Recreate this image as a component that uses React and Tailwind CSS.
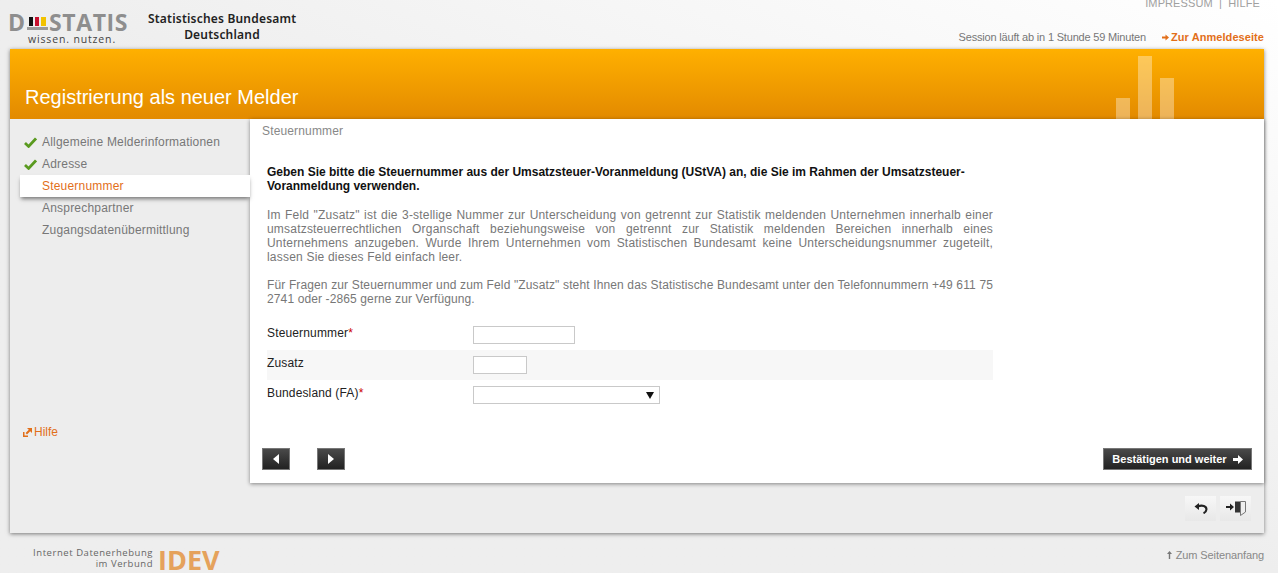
import React from 'react';

const Check = () => (
  <svg width="13" height="11" viewBox="0 0 13 11" className="shrink-0">
    <path d="M1 6 L4.6 9.4 L12 1.4" fill="none" stroke="#5a9a1f" strokeWidth="2.8" />
  </svg>
);

const SmallArrow = () => (
  <svg width="7" height="7" viewBox="0 0 7 7" className="shrink-0">
    <path d="M0 2.5 H3.5 V0.5 L7 3.5 L3.5 6.5 V4.5 H0 Z" fill="#e26f1a" />
  </svg>
);

const steps = [
  { label: 'Allgemeine Melderinformationen', done: true },
  { label: 'Adresse', done: true },
  { label: 'Steuernummer', active: true },
  { label: 'Ansprechpartner' },
  { label: 'Zugangsdatenübermittlung' },
];

const Logo = () => (
  <div className="w-[119px] flex flex-col items-start">
    <div className="-ml-[2px] flex items-center h-[16px] text-[#8e8e8e] text-[23px] leading-[16px] font-bold font-['Open_Sans',sans-serif]">
      <span>D</span>
      <svg width="21" height="16" viewBox="0 0 21 16" className="shrink-0 ml-[2px] mr-[1px]">
        <rect x="0" y="13" width="21" height="3" fill="#9a9a9a" />
        <rect x="2" y="3" width="4" height="9" fill="#111" />
        <rect x="8" y="3" width="4" height="9" fill="#c8102e" />
        <rect x="14" y="3" width="5" height="9" fill="#f2c200" />
      </svg>
      <span className="tracking-[0.6px]">STATIS</span>
    </div>
    <div className="ml-[18px] mt-[2px] text-[10.5px] leading-[14px] tracking-[0.85px] text-[#444] font-['Open_Sans',sans-serif]">wissen. nutzen.</div>
  </div>
);

export default function App() {
  return (
    <div className="h-[573px] overflow-hidden bg-gradient-to-bl from-white to-[#eeeeee] to-50% font-['Liberation_Sans',Arial,sans-serif] text-[12px] leading-[14px] text-[#777]">
      {/* kopf */}
      <div className="h-[49px] flex justify-between pl-[10px] pr-[14px]">
        <div className="flex pt-[14px]">
          <Logo />
          <div className="w-[148px] ml-[19px] -mt-[3px] text-center whitespace-nowrap text-[12px] leading-[16px] font-semibold text-[#222] tracking-[0.2px] font-['Noto_Sans',sans-serif]">
            Statistisches Bundesamt<br />Deutschland
          </div>
        </div>
        <div className="flex flex-col items-end">
          <div className="-mt-[4px] pr-[4px] text-[11px] text-[#a0a0a0] tracking-[0.1px]">IMPRESSUM&nbsp; |&nbsp; HILFE</div>
          <div className="flex items-center mt-[20px] text-[11px]">
            <span className="text-[#777] tracking-[-0.18px]">Session läuft ab in 1 Stunde 59 Minuten</span>
            <span className="ml-[16px] mr-[2px]"><SmallArrow /></span>
            <span className="font-bold text-[#e26f1a] tracking-[0.07px]">Zur Anmeldeseite</span>
          </div>
        </div>
      </div>

      {/* panel */}
      <div className="ml-[10px] w-[1254px] h-[484px] bg-[#ededed] shadow-[0_1px_4px_rgba(0,0,0,0.5)] flex flex-col">
        <div className="h-[70px] shrink-0 bg-gradient-to-b from-[#ffb000] to-[#e38a00] flex justify-between items-end">
          <h1 className="pl-[15px] pb-[10px] text-[20px] leading-[23px] text-white font-normal">Registrierung als neuer Melder</h1>
          <div className="flex items-end gap-[8px] mr-[90px] h-[63px]">
            <div className="w-[14px] h-[21px] bg-white/35" />
            <div className="w-[14px] h-[63px] bg-white/35" />
            <div className="w-[14px] h-[41px] bg-white/35" />
          </div>
        </div>

        <div className="flex h-[364px] shrink-0">
          <div className="w-[240px] shrink-0 flex flex-col pt-[12px] pb-[44px] justify-between tracking-[0.2px]">
            <ul>
              {steps.map((s) => (
                <li
                  key={s.label}
                  className={
                    s.active
                      ? 'h-[22px] ml-[10px] pl-[22px] flex items-center bg-white text-[#e26f1a] shadow-[0_3px_4px_-1px_rgba(0,0,0,0.5)] relative'
                      : 'h-[22px] ml-[14px] pl-[18px] flex items-center relative'
                  }
                >
                  {s.done && <span className="absolute left-0 top-[6px]"><Check /></span>}
                  {s.label}
                </li>
              ))}
            </ul>
            <div className="flex items-center pl-[13px] gap-[2px] text-[#e26f1a] tracking-normal">
              <svg width="9" height="9" viewBox="0 0 9 9" className="shrink-0">
                <path d="M0 4 V9 H5 V7.5 H1.5 V4 Z M4 0 H9 V5 L7.2 3.2 L4 6.4 L2.6 5 L5.8 1.8 Z" fill="#e26f1a" />
              </svg>
              Hilfe
            </div>
          </div>

          <div className="flex-1 bg-white shadow-[0_1px_4px_rgba(0,0,0,0.45)] px-[12px] flex flex-col">
            <div className="pt-[5px] h-[46px] text-[#888] tracking-[0.15px]">Steuernummer</div>
            <div className="w-[726px] ml-[5px]">
              <p className="font-bold text-[#111]">
                Geben Sie bitte die Steuernummer aus der Umsatzsteuer-Voranmeldung (UStVA) an, die Sie im Rahmen der Umsatzsteuer-Voranmeldung verwenden.
              </p>
              <p className="mt-[15px] text-justify text-[#777] tracking-[0.2px]">
                Im Feld "Zusatz" ist die 3-stellige Nummer zur Unterscheidung von getrennt zur Statistik meldenden Unternehmen innerhalb einer umsatzsteuerrechtlichen Organschaft beziehungsweise von getrennt zur Statistik meldenden Bereichen innerhalb eines Unternehmens anzugeben. Wurde Ihrem Unternehmen vom Statistischen Bundesamt keine Unterscheidungsnummer zugeteilt, lassen Sie dieses Feld einfach leer.
              </p>
              <p className="mt-[14px] text-justify text-[#777] tracking-[0.12px]">
                Für Fragen zur Steuernummer und zum Feld "Zusatz" steht Ihnen das Statistische Bundesamt unter den Telefonnummern +49 611 75 2741 oder -2865 gerne zur Verfügung.
              </p>
            </div>
            <div className="w-[726px] ml-[5px] mt-[14px] text-[#222] tracking-[0.15px]">
              <div className="h-[30px] flex items-center">
                <label className="w-[206px] -mt-[4px]">Steuernummer<span className="text-[#c00]">*</span></label>
                <input type="text" className="w-[102px] h-[18px] border border-[#c9c9c9] bg-white outline-none" />
              </div>
              <div className="h-[30px] flex items-center bg-[#f7f7f7]">
                <label className="w-[206px] -mt-[4px]">Zusatz</label>
                <input type="text" className="w-[54px] h-[18px] border border-[#c9c9c9] bg-white outline-none" />
              </div>
              <div className="h-[30px] flex items-center">
                <label className="w-[206px] -mt-[4px]">Bundesland (FA)<span className="text-[#c00]">*</span></label>
                <div className="w-[187px] h-[18px] border border-[#c9c9c9] bg-white flex items-center justify-end pr-[5px]">
                  <svg width="8" height="7" viewBox="0 0 8 7"><path d="M0 0 H8 L4 7 Z" fill="#111" /></svg>
                </div>
              </div>
            </div>
            <div className="flex mt-[38px] items-start">
              <button className="w-[28px] h-[22px] border border-[#777] bg-gradient-to-b from-[#4a4a4a] to-[#222] flex items-center justify-center">
                <svg width="6" height="10" viewBox="0 0 6 10"><path d="M6 0 V10 L0 5 Z" fill="#fff" /></svg>
              </button>
              <button className="ml-[27px] w-[28px] h-[22px] border border-[#777] bg-gradient-to-b from-[#4a4a4a] to-[#222] flex items-center justify-center">
                <svg width="6" height="10" viewBox="0 0 6 10"><path d="M0 0 V10 L6 5 Z" fill="#fff" /></svg>
              </button>
              <button className="ml-auto w-[149px] h-[22px] border border-[#777] bg-gradient-to-b from-[#4a4a4a] to-[#222] text-white font-bold text-[11px] flex items-center justify-center gap-[6px]">
                Bestätigen und weiter
                <svg width="10" height="9" viewBox="0 0 10 9"><path d="M0 3 H5 V0 L10 4.5 L5 9 V6 H0 Z" fill="#fff" /></svg>
              </button>
            </div>
          </div>
        </div>

        <div className="flex-1 flex justify-end gap-[4px] pt-[13px] pr-[13px]">
          <button className="w-[31px] h-[25px] bg-gradient-to-b from-[#f7f7f7] to-[#e8e8e8] flex items-center justify-center">
            <svg width="14" height="11" viewBox="0 0 14 11">
              <path d="M4 3.4 C8 1.6 12.8 3 12.4 6.6 C12.2 8.6 11 9.6 9.5 10.2" fill="none" stroke="#222" strokeWidth="2.1" />
              <path d="M0.5 3.6 L5 0 V7 Z" fill="#222" />
            </svg>
          </button>
          <button className="w-[31px] h-[25px] bg-gradient-to-b from-[#f7f7f7] to-[#e8e8e8] flex items-center justify-center">
            <svg width="20" height="15" viewBox="0 0 20 15">
              <path d="M0 5 H4 V2.5 L8 6 L4 9.5 V7 H0 Z" fill="#222" />
              <rect x="9" y="0.5" width="6" height="11" fill="#333" />
              <path d="M14.5 0.5 H19.5 V11 L14.5 14.5 Z" fill="#eeeeee" stroke="#777" strokeWidth="1" />
            </svg>
          </button>
        </div>
      </div>

      {/* fuss */}
      <div className="flex justify-between items-start pr-[14px] pt-[14px]">
        <div className="flex items-start">
          <div className="w-[153px] text-right text-[9.5px] leading-[11px] tracking-[0.55px] text-[#666] font-['Open_Sans',sans-serif]">
            Internet Datenerhebung<br />im Verbund
          </div>
          <div className="ml-[5px] -mt-[1px] text-[27px] leading-[27px] font-bold text-[#e5a25c] font-['Open_Sans',sans-serif]">IDEV</div>
        </div>
        <div className="pt-[1px] flex items-center gap-[4px] text-[11px] tracking-[-0.1px] text-[#888]">
          <svg width="5" height="8" viewBox="0 0 5 8" className="shrink-0">
            <path d="M2.5 0 L5 3 H3.2 V8 H1.8 V3 H0 Z" fill="#777" />
          </svg>
          Zum Seitenanfang
        </div>
      </div>
    </div>
  );
}
